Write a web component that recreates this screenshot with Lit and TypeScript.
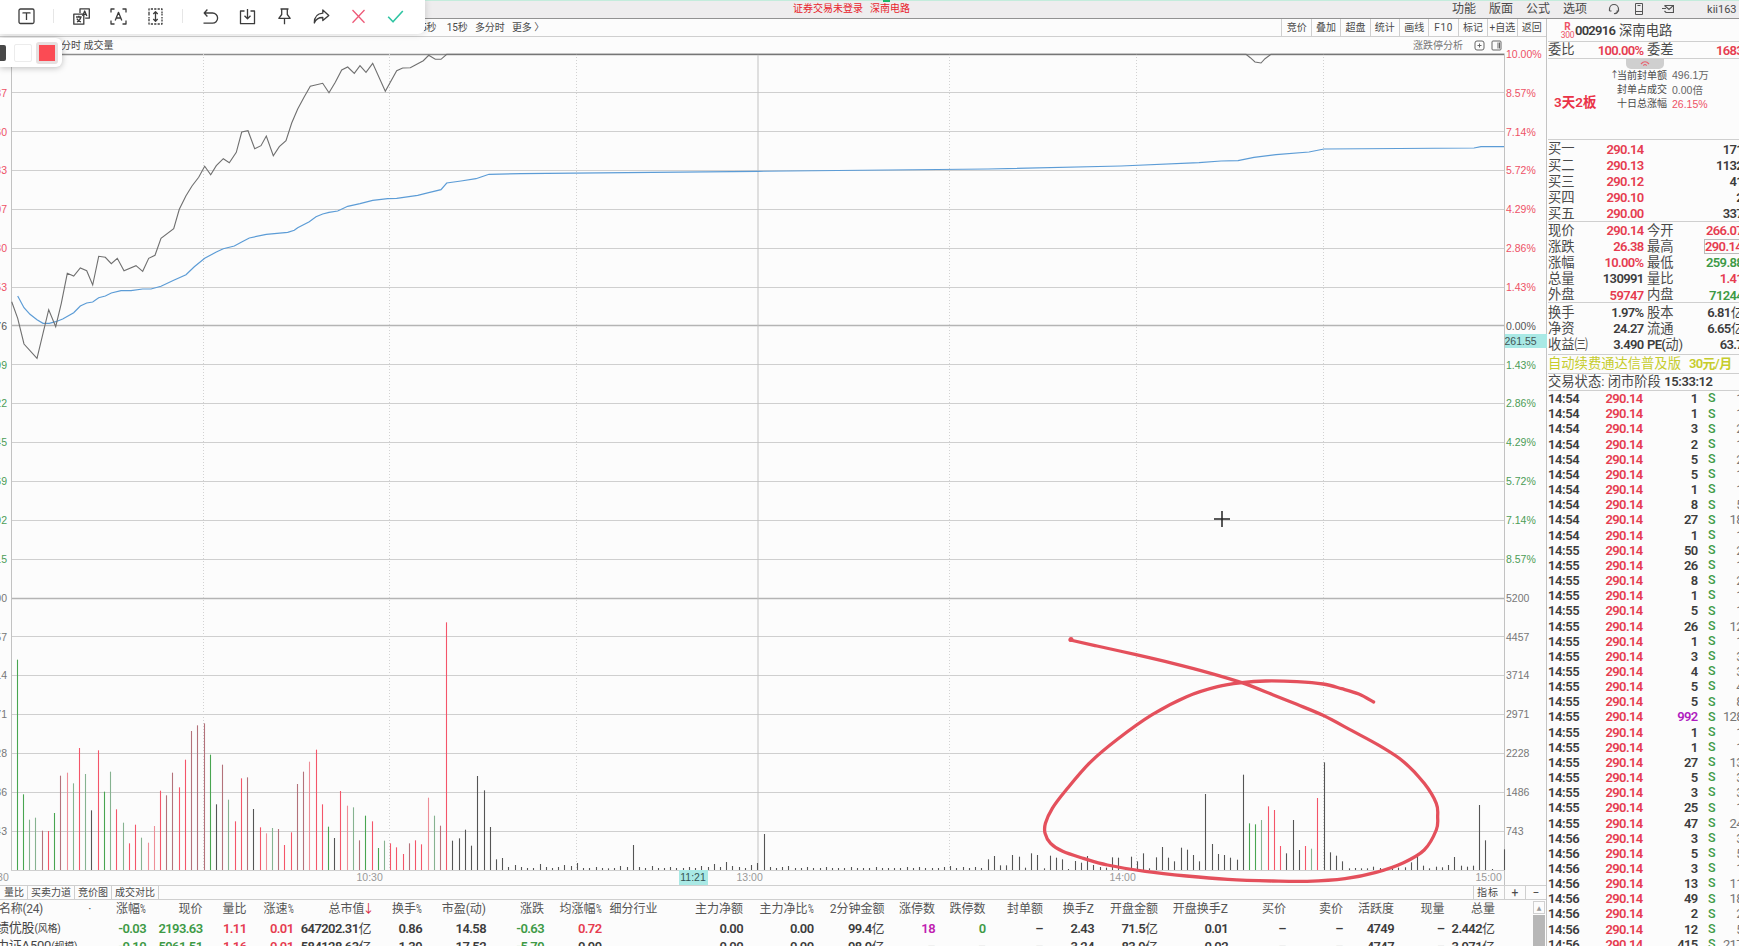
import { LitElement, html, svg, css, nothing } from "lit";
import { customElement, property } from "lit/decorators.js";
import { classMap } from "lit/directives/class-map.js";

type Point = [number, number];

const CHART_LEFT = 10.5;
const CHART_TOP = 54;
const CHART_WIDTH = 1493.5;
const CHART_HEIGHT = 816;
const ROW = CHART_HEIGHT / 21;
const MINUTE = CHART_WIDTH / 240;

const parsePoints = (text: string): Point[] =>
	text
		.trim()
		.split(/\s+/)
		.map((pair) => pair.split(",").map(Number) as Point);

// series are stored in thirds of a pixel, y counted from 40px
const toPolyline = (text: string) =>
	parsePoints(text)
		.map(([x, y]) => `${(x / 3).toFixed(1)},${(40 + y / 3).toFixed(1)}`)
		.join(" ");

const PRICE = toPolyline(`
	32,785 50,835 69,912 108,955 126,880 143,809 164,860 181,790 199,700 218,708
	238,684 257,692 275,735 293,649 313,652 331,671 349,655 369,692 405,677 425,694
	443,655 462,646 480,595 518,566 535,508 555,467 573,438 593,412 611,379 629,404
	646,377 667,356 685,368 706,337 722,276 741,272 761,326 780,317 796,288 817,347
	835,320 855,302 872,249 890,207 910,170 928,139 965,130 984,158 1003,127 1022,90
	1040,81 1060,100 1077,77 1095,97 1115,70 1153,154 1187,92 1205,84 1228,83 1250,71
	1267,62 1283,46 1303,58 1320,58 1337,43 3735,43 3748,53 3762,66 3780,69 3792,56
	3810,43 4509,43
`);

const AVERAGE = toPolyline(`
	50,768 69,803 87,823 108,839 126,850 145,850 164,845 185,837 218,818 238,798
	257,789 275,786 293,773 313,768 331,759 360,752 390,752 425,747 450,747 480,739
	518,721 555,704 580,680 611,655 646,636 667,626 700,618 722,606 745,594 796,583
	860,577 880,571 890,563 925,545 945,530 965,522 984,517 1010,513 1040,499 1077,491
	1115,481 1160,476 1187,475 1250,466 1283,458 1320,449 1337,429 1380,423 1425,416
	1440,411 1464,403 1560,401 2271,394 2961,387 3360,378 3594,368 3660,363 3711,362
	3759,352 3825,344 3924,336 3969,327 4419,324 4440,320 4509,320
`);

// one entry per minute, height in thirds of a pixel plus tone
const VOLUME = `
	631g 227g 151h 157h 118d 117r 171g 283d 292p 260h 366r 288h 179k 359r 235g 295h
	182r 142h 80r 136r 97h 82p 132p 238r 224d 292d 248r 331r 417d 434d 440d 346g 197k
	316d 211h 146r 275r 278d 183k 128r 110p 126h 123d 75r 113r 258d 295d 325p 361r
	197r 130g 96k 237r 193p 188h 89d 163g 146r 66g 88h 80r 68r 48r 80d 89r 77r 217p
	163h 133d 743r 88k 95k 121k 73k 282k 239k 129k 32k 36k 9k 15k 9k 6k 6k 18k 9k
	6k 9k 15k 12k 21k 6k 6k 9k 6k 5k 6k 12k 9k 75k 9k 6k 12k 6k 6k 9k 6k 6k 9k
	6k 12k 9k 18k 9k 24k 12k 9k 6k 15k 21k 108k 9k 6k 9k 12k 6k 6k 9k 6k 6k 9k 6k 6k
	6k 9k 6k 6k 6k 9k 6k 6k 6k 6k 9k 6k 9k 6k 6k 6k 9k 12k 6k 9k 6k 9k 6k
	32k 42k 14k 14k 45k 40k 7k 50k 45k 5k 43k 37k 32k 3k 27k 22k 42k 15k
	9k 7k 38k 37k 5k 40k 26k 50k 5k 38k 69k 37k 26k 67k 61k 45k 26k 228k 78k 48k 45k
	37k 31k 286k 140g 137g 150h 191r 180r 72r 50k 150k 60k 72r 64h 216r 323k 53k
	43k 26k 5k 6k 5k 5k 10k 6k 6k 5k 7k 8k 23k 39k 13k 5k 10k 8k 15k 39k 13k 10k
	13k 195k 89k 3k 0k 62k
`
	.trim()
	.split(/\s+/);

const MARKER = parsePoints(`
	262,90 340,108 453,134 560,160 660,187 760,218 850,254 920,283 996,316 1080,362
	1160,407 1230,455 1290,520 1325,580 1329,620 1325,660 1290,720 1230,758 1150,787
	1060,806 950,814 850,813 720,808 600,798 480,784 370,765 300,745 240,724 205,700
	189,670 190,640 210,595 250,540 320,457 400,387 500,314 600,260 690,230 760,218
	830,213 920,215 996,222 1050,236 1100,252 1143,276
`).map(([x, y]) => [980 + x / 2.904, 610 + y / 3] as Point);

const smoothPath = (points: Point[]) => {
	let d = `M${points[0]}`;
	for (let i = 0; i < points.length - 1; i++) {
		const a = points[i - 1] ?? points[i];
		const b = points[i];
		const c = points[i + 1];
		const e = points[i + 2] ?? c;
		d += `C${b[0] + (c[0] - a[0]) / 6} ${b[1] + (c[1] - a[1]) / 6} ${c[0] - (e[0] - b[0]) / 6} ${c[1] - (e[1] - b[1]) / 6} ${c[0]} ${c[1]}`;
	}
	return d;
};

const PERCENTS = ["10.00", "8.57", "7.14", "5.72", "4.29", "2.86", "1.43", "0.00", "1.43", "2.86", "4.29", "5.72", "7.14", "8.57"];
const PRICES = ["290.14", "286.37", "282.60", "278.83", "275.07", "271.30", "267.53", "263.76", "259.99", "256.22", "252.45", "248.69", "244.92", "241.15"];
const VOLUMES = ["5200", "4457", "3714", "2971", "2228", "1486", "743"];

const toneAt = (row: number) => (row < 7 ? "up" : row > 7 && row < 14 ? "down" : row === 7 ? "zero" : "flat");

@customElement("time-chart")
export class TimeChart extends LitElement {
	static styles = css`
		:host {
			display: grid;
			grid-template-columns: 10.5px 1493.5px 1fr;
			height: 831px;
		}

		.axis {
			font: 10.5px/1 "Liberation Sans", sans-serif;
			margin-top: -19.3px;
			color: #777;
		}

		.axis div {
			height: 38.857px;
			display: flex;
			align-items: center;
		}

		.left div {
			justify-content: flex-end;
			width: 40px;
			margin-left: -33px;
		}

		.right {
			padding-left: 2px;
		}

		.axis .up {
			color: #ee5266;
		}

		.axis .down {
			color: #4c9d57;
		}

		.axis .zero {
			color: #555;
		}

		.plot {
			position: relative;
		}

		svg {
			display: block;
			overflow: visible;
		}

		.times {
			font: 10.5px/15px "Liberation Sans", sans-serif;
			color: #999;
			height: 15px;
		}

		.times span {
			position: absolute;
			top: 816px;
		}

		.times .cursor-time {
			background: #a9e9e5;
			color: #355;
			width: 29px;
			text-align: center;
		}

		.cursor-price {
			position: absolute;
			left: 1494px;
			top: 280px;
			width: 42px;
			height: 14px;
			background: #a9e9e5;
			color: #455;
			font: 10.5px/14px "Liberation Sans", sans-serif;
		}
	`;

	private renderGrid() {
		const rows = Array.from({ length: 22 }, (_, i) => i);
		return svg`
			${rows.map((i) => {
				const y = Math.floor(CHART_TOP + i * ROW + 0.01) + (i === 7 ? -0.5 : 0.5);
				const major = i % 7 === 0 && i < 21;
				return svg`<line x1="10" x2="1504" y1=${y} y2=${y} stroke=${i === 0 ? "#8c8c8c" : major ? "#b4b4b4" : "#cfcfcf"} stroke-width=${major ? 1.4 : 1.1} />`;
			})}
			${[202.5, 388.5, 575.5, 948.5, 1135.5, 1322.5].map(
				(x) => svg`<line x1=${x} x2=${x} y1="54" y2="870" stroke="#d2d2d2" stroke-dasharray="1 2" />`
			)}
			${[10.5, 757, 1503.5].map(
				(x) => svg`<line x1=${x} x2=${x} y1="54" y2=${x > 1500 ? 885 : 870} stroke="#c2c2c2" />`
			)}
		`;
	}

	private renderBars() {
		const tones: Record<string, string> = {
			r: "#f45569",
			p: "#ee8e98",
			d: "#b3727a",
			g: "#48a550",
			h: "#86b290",
			k: "#555",
		};
		return VOLUME.map((bar, i) => {
			const x = Math.floor(CHART_LEFT - 0.4 + (i + 1) * MINUTE) + 0.5;
			const height = parseInt(bar) / 3;
			return svg`<line x1=${x} x2=${x} y1=${870 - height} y2="870" stroke=${tones[bar.slice(-1)]} stroke-width="1.1" />`;
		});
	}

	render() {
		const right = [...PERCENTS.map((p) => `${p}%`), ...VOLUMES];
		const left = [...PRICES, ...VOLUMES];
		return html`
			<div class="axis left">
				${left.map((label, i) => html`<div class=${toneAt(i)}>${label}</div>`)}
			</div>
			<div class="plot">
				<svg
					width=${CHART_WIDTH}
					height=${CHART_HEIGHT}
					viewBox="${CHART_LEFT - 0.5} ${CHART_TOP} ${CHART_WIDTH} ${CHART_HEIGHT}"
				>
					${this.renderGrid()} ${this.renderBars()}
					<polyline points=${AVERAGE} fill="none" stroke="#5c9cd6" stroke-width="1.2" />
					<polyline points=${PRICE} fill="none" stroke="#6f6f6f" stroke-width="1.1" />
				</svg>
				<div class="times">
					<span style="left:-28px">09:30</span>
					<span style="left:346px">10:30</span>
					<span class="cursor-time" style="left:668px">11:21</span>
					<span style="left:726px">13:00</span>
					<span style="left:1099px">14:00</span>
					<span style="left:1465px">15:00</span>
				</div>
				<div class="cursor-price">261.55</div>
			</div>
			<div class="axis right">
				${right.map((label, i) => html`<div class=${toneAt(i)}>${label}</div>`)}
			</div>
		`;
	}
}

const COLUMNS: [string, number][] = [
	["涨幅%", 51],
	["现价", 56.5],
	["量比", 44],
	["涨速%", 47],
	["总市值", 78],
	["换手%", 50.5],
	["市盈(动)", 64],
	["涨跌", 58],
	["均涨幅%", 57.5],
	["细分行业", 56],
	["主力净额", 85.5],
	["主力净比%", 70.5],
	["2分钟金额", 71],
	["涨停数", 50.5],
	["跌停数", 50.5],
	["封单额", 57.5],
	["换手Z", 51],
	["开盘金额", 64],
	["开盘换手Z", 70],
	["买价", 58],
	["卖价", 57],
	["活跃度", 51],
	["现量", 50.5],
	["总量", 50.5],
];

// a leading letter gives the colour: r red, g green, m magenta
const SECTORS = [
	{
		name: "绩优股",
		kind: "(风格)",
		cells: ["g-0.03", "g2193.63", "r1.11", "r0.01", "647202.31亿", "0.86", "14.58", "g-0.63", "r0.72", "", "0.00", "0.00", "99.4亿", "m18", "g0", "–", "2.43", "71.5亿", "0.01", "–", "–", "4749", "–", "2.442亿"],
	},
	{
		name: "中证A500",
		kind: "(规模)",
		cells: ["g-0.10", "g5961.51", "r1.16", "r0.01", "584128.63亿", "1.39", "17.52", "g-5.79", "0.99", "", "0.00", "0.00", "98.9亿", "–", "–", "–", "3.24", "83.9亿", "0.02", "–", "–", "4747", "–", "3.971亿"],
	},
];

@customElement("sector-table")
export class SectorTable extends LitElement {
	static styles = css`
		:host {
			display: flex;
			height: 46px;
			overflow: hidden;
			font-family: "Roboto", "Noto Sans CJK SC", sans-serif;
			color: #444;
		}

		.rows {
			flex: 1;
		}

		.row {
			display: grid;
			height: 18px;
			align-items: center;
			font-size: 13px;
			line-height: 18px;
			white-space: nowrap;
		}

		.head {
			height: 17.5px;
			font-size: 12px;
			color: #555;
			margin-bottom: 1.5px;
		}

		.row > div {
			text-align: right;
		}

		.row > .name {
			text-align: left;
			margin-left: -4px;
			letter-spacing: -0.2px;
		}

		.head > .name {
			margin-left: -1px;
			letter-spacing: -0.3px;
			display: flex;
			justify-content: space-between;
			padding-right: 4px;
		}

		.kind {
			font-size: 10px;
		}

		b {
			font-weight: 600;
			letter-spacing: -0.6px;
			color: #3c3c3c;
		}

		.percent {
			display: inline-block;
			width: 6px;
			font-size: 12px;
			transform: scaleX(0.65);
			transform-origin: left;
		}

		.arrow {
			color: #d8283c;
			font-size: 12px;
			margin: 0 -3px 0 -2px;
		}

		.r {
			color: #e63c50;
		}

		.g {
			color: #3e9a46;
		}

		.m {
			color: #c020b0;
		}

		.scroll {
			width: 13px;
			padding-top: 1px;
			display: flex;
			flex-direction: column;
			gap: 1px;
		}

		.up {
			height: 11px;
			border: 1px solid #d0d0d0;
			font: 6px/11px "DejaVu Sans", sans-serif;
			text-align: center;
			color: #999;
			margin-right: 1px;
		}

		.thumb {
			flex: 1;
			background: #b7b7b7;
			margin-right: 1px;
		}
	`;

	private renderCell(cell: string) {
		const tone = /^[rgm]/.test(cell) ? cell[0] : "";
		const text = tone ? cell.slice(1) : cell;
		const unit = text.endsWith("亿");
		return html`<div><b class=${tone}>${unit ? text.slice(0, -1) : text}</b>${unit ? "亿" : nothing}</div>`;
	}

	private renderHead(label: string) {
		const percent = label.endsWith("%");
		return html`<div>${percent ? label.slice(0, -1) : label}${percent ? html`<span class="percent">%</span>` : nothing}${label === "总市值"
				? html`<span class="arrow">↓</span>`
				: nothing}</div>`;
	}

	render() {
		const template = `grid-template-columns: 95px ${COLUMNS.map(([, width]) => `${width}px`).join(" ")}`;
		return html`
			<div class="rows">
				<div class="row head" style=${template}>
					<div class="name"><span>名称(24)</span><span>·</span></div>
					${COLUMNS.map(([label]) => this.renderHead(label))}
				</div>
				${SECTORS.map(
					(sector) => html`
						<div class="row" style=${template}>
							<div class="name">${sector.name}<span class="kind">${sector.kind}</span></div>
							${sector.cells.map((cell) => this.renderCell(cell))}
						</div>
					`
				)}
			</div>
			<div class="scroll">
				<div class="up">▲</div>
				<div class="thumb"></div>
			</div>
		`;
	}
}

const TRADE_VOLUMES = [1, 1, 3, 2, 5, 5, 1, 8, 27, 1, 50, 26, 8, 1, 5, 26, 1, 3, 4, 5, 5, 992, 1, 1, 27, 5, 3, 25, 47, 3, 5, 3, 13, 49, 2, 12, 415];
const TRADE_COUNTS = [1, 1, 2, 1, 2, 1, 1, 5, 18, 1, 2, 1, 2, 1, 1, 12, 1, 3, 3, 4, 8, 128, 1, 1, 13, 3, 3, 1, 24, 3, 5, 1, 11, 18, 2, 5, 217];

@customElement("quote-panel")
export class QuotePanel extends LitElement {
	static styles = css`
		:host {
			display: block;
			width: 197px;
			font: 13.3px/1 "Roboto", "Noto Sans CJK SC", sans-serif;
			color: #4a4a4a;
			box-sizing: border-box;
			border-left: 1px solid #c4c4c4;
			padding-left: 1px;
			white-space: nowrap;
		}

		b {
			font-weight: 600;
			font-size: 13px;
			letter-spacing: -0.65px;
			color: #3c3c3c;
		}

		.section {
			border-bottom: 1px solid #cfcfcf;
			box-sizing: border-box;
		}

		.title {
			height: 23px;
			display: flex;
			align-items: center;
			padding: 1px 0 0 13px;
		}

		.badge {
			display: flex;
			flex-direction: column;
			align-items: center;
			width: 13px;
			margin-right: 1px;
			font-size: 8.5px;
			line-height: 8px;
			color: #ee5266;
		}

		.badge strong {
			font-size: 10px;
		}

		.badge span {
			letter-spacing: -0.3px;
		}

		.title b {
			letter-spacing: -0.75px;
			margin-right: 4px;
		}

		.row {
			display: grid;
			grid-template-columns: 30px 65.5px 30px 69.5px;
			height: 16.1px;
			align-items: center;
		}

		.row b {
			text-align: right;
		}

		.row b i {
			font-style: normal;
			font-weight: 400;
			font-size: 13px;
		}

		.row span + b + span {
			padding-left: 3.5px;
		}

		.seal {
			height: 81px;
			display: grid;
			grid-template-columns: 62px 1fr;
			position: relative;
		}

		.handle {
			position: absolute;
			left: 78px;
			top: 0;
			width: 38px;
			height: 10px;
			border-radius: 0 0 5px 5px;
			background: #cfcfcf;
			display: flex;
			justify-content: center;
		}

		.streak {
			align-self: end;
			padding: 0 0 30px 6px;
			color: #ea3348;
			font-weight: 600;
			font-size: 13.5px;
		}

		.facts {
			padding-top: 9.5px;
			font-size: 10px;
		}

		.facts div {
			height: 14.2px;
			display: flex;
			align-items: center;
		}

		.facts em {
			width: 7px;
			font-style: normal;
			text-align: right;
			font-size: 9px;
		}

		.facts span {
			width: 55px;
		}

		.facts p {
			margin: 0;
			font-size: 10.5px;
		}

		.facts .value {
			font-family: "Liberation Sans", "Noto Sans CJK SC", sans-serif;
			color: #666;
		}

		.facts .r {
			color: #ee5266;
		}

		.buys {
			height: 82px;
			padding-top: 1px;
		}

		.quote {
			height: 81px;
			padding-top: 0.5px;
		}

		.finance {
			height: 52px;
			padding-top: 1.5px;
		}

		.promo {
			height: 19px;
			line-height: 17px;
			color: #c6cc2c;
		}

		.promo b {
			color: #c6cc2c;
			margin-left: 8px;
		}

		.state {
			height: 17px;
			line-height: 16px;
		}

		.state b {
			letter-spacing: -0.4px;
		}

		.boxed {
			border: 1px solid #bbb;
			justify-self: end;
			height: 13px;
			line-height: 13px;
		}

		.trade {
			display: grid;
			grid-template-columns: 40px 54.5px 55px 18px 27.5px;
			height: 15.17px;
			align-items: center;
		}

		.trade > * {
			text-align: right;
		}

		.trade > :first-child {
			text-align: left;
			letter-spacing: -0.4px;
		}

		.trade .side {
			color: #3e9a46;
			font-size: 12.5px;
			font-weight: 500;
		}

		.trade .count {
			font-size: 13px;
			letter-spacing: -0.6px;
			color: #777;
		}

		.r {
			color: #e63c50;
		}

		.g {
			color: #3e9a46;
		}

		.m {
			color: #b01cc0;
		}
	`;

	private renderRow(label: string, value: string, tone = "", label2 = "", value2 = "", tone2 = "") {
		const unit = value2.endsWith("亿");
		return html`
			<div class="row">
				<span>${label}</span>
				<b class=${tone}>${value}</b>
				<span>${label2.startsWith("PE") ? html`<b>PE(</b>动)` : label2}</span>
				<b class=${tone2}>${unit ? value2.slice(0, -1) : value2}${unit ? html`<i>亿</i>` : nothing}</b>
			</div>
		`;
	}

	private renderTrade(volume: number, index: number) {
		const time = index < 10 ? "14:54" : index < 29 ? "14:55" : "14:56";
		return html`
			<div class="trade">
				<b>${time}</b>
				<b class="r">290.14</b>
				<b class=${classMap({ m: volume > 900 })}>${volume}</b>
				<span class="side">S</span>
				<span class="count">${TRADE_COUNTS[index]}</span>
			</div>
		`;
	}

	render() {
		return html`
			<div class="section title">
				<div class="badge"><strong>R</strong><span>300</span></div>
				<b>002916</b>深南电路
			</div>
			<div class="section">${this.renderRow("委比", "100.00%", "r", "委差", "1683", "r")}</div>
			<div class="section seal">
				<div class="handle">
					<svg width="10" height="9" viewBox="0 0 10 9" fill="none" stroke="#e8606e" stroke-width="1.2">
						<path d="M1 5Q5 0.5 9 5M3.4 6.6Q5 4.4 6.6 6.6" />
					</svg>
				</div>
				<div class="streak">3天2板</div>
				<div class="facts">
					<div><em>↑</em><span>当前封单额</span><p class="value">496.1万</p></div>
					<div><em></em><span>封单占成交</span><p class="value">0.00倍</p></div>
					<div><em></em><span>十日总涨幅</span><p class="value r">26.15%</p></div>
				</div>
			</div>
			<div class="section buys">
				${this.renderRow("买一", "290.14", "r", "", "171")} ${this.renderRow("买二", "290.13", "r", "", "1132")}
				${this.renderRow("买三", "290.12", "r", "", "41")} ${this.renderRow("买四", "290.10", "r", "", "2")}
				${this.renderRow("买五", "290.00", "r", "", "337")}
			</div>
			<div class="section quote">
				${this.renderRow("现价", "290.14", "r", "今开", "266.07", "r")}
				${this.renderRow("涨跌", "26.38", "r", "最高", "290.14", "r boxed")}
				${this.renderRow("涨幅", "10.00%", "r", "最低", "259.88", "g")}
				${this.renderRow("总量", "130991", "", "量比", "1.41", "r")}
				${this.renderRow("外盘", "59747", "r", "内盘", "71244", "g")}
			</div>
			<div class="section finance">
				${this.renderRow("换手", "1.97%", "", "股本", "6.81亿")} ${this.renderRow("净资", "24.27", "", "流通", "6.65亿")}
				${this.renderRow("收益㈢", "3.490", "", "PE(动)", "63.7")}
			</div>
			<div class="section promo">自动续费通达信普及版<b>30元/月</b></div>
			<div class="section state">交易状态: 闭市阶段 <b>15:33:12</b></div>
			${TRADE_VOLUMES.map((volume, i) => this.renderTrade(volume, i))}
		`;
	}
}

const ICONS = {
	text: svg`<rect x="1" y="1" width="15" height="14.5" rx="1.5" /><path d="M5 5.6V4.8H12V5.6M8.5 4.8V12" />`,
	translate: svg`<path d="M7 5V.8H16.3V10.2H12.2" /><rect x=".8" y="6.2" width="10" height="10" /><path d="M9.6 8L11.7 3L13.8 8M10.3 6.4H13.1M3 9H8.6M5.8 7.8V9M4 14C6 13 7.4 11.5 7.8 9.2M3.8 10.6C4.8 12.4 6 13.3 8 14" />`,
	ocr: svg`<path d="M1 4.5V1H4.5M12.5 1H16V4.5M16 12.5V16H12.5M4.5 16H1V12.5M5.2 12.6L8.5 4.3L11.8 12.6M6.3 10H10.7" />`,
	scroll: svg`<path d="M2 6V1H15V6M2 11V16H15V11" stroke-dasharray="2.2 1.2" /><path d="M2 6V11M15 6V11" stroke-dasharray="1.5 1.5" /><path d="M8.5 4V13M6.3 6L8.5 3.8L10.7 6M6.3 11L8.5 13.2L10.7 11" />`,
	undo: svg`<path d="M5.4 1.5L2.2 5L5.4 8.5M2.4 5H10.5A5 5 0 0 1 10.5 15.2H1.5" />`,
	save: svg`<path d="M5.5 3H1.5V15.7H15.5V3H11.5M8.5 1V10.5M5.5 7.7L8.5 10.7L11.5 7.7" />`,
	pin: svg`<path d="M4.5 1H12.5M5.7 1V6.5L2.8 10.3H14.2L11.3 6.5V1M8.5 10.3V16.3" />`,
	share: svg`<path d="M9.8 2L15.8 7.4L9.8 12.6V9.5C5.5 9.4 3 11 1.3 15C1.3 9 4.5 5.6 9.8 5.2Z" />`,
	cancel: svg`<path d="M2.5 2L14.5 14.8M14.5 2L2.5 14.8" stroke="#ee5a78" />`,
	confirm: svg`<path d="M1.2 8.8L6 13.8L15.8 3" stroke="#2fc4a2" stroke-width="1.6" />`,
};

@customElement("capture-toolbar")
export class CaptureToolbar extends LitElement {
	static styles = css`
		:host {
			display: block;
		}

		.bar {
			width: 425px;
			height: 34px;
			box-sizing: border-box;
			padding: 0 0 2px 7.5px;
			background: #fff;
			border-radius: 0 0 7px 0;
			box-shadow: 0 0 7px rgba(0, 0, 0, 0.16);
			display: flex;
			align-items: center;
		}

		svg {
			flex: none;
			width: 17px;
			height: 17px;
			padding: 0 10px;
			fill: none;
			stroke: #3c3c3c;
			stroke-width: 1.3;
			stroke-linejoin: round;
		}

		.gap {
			flex: none;
			width: 1px;
			height: 14px;
			background: #e6e6e6;
			margin: 0 8.5px;
		}

		.swatches {
			width: 62px;
			height: 29px;
			margin-top: 4px;
			background: #fff;
			border-radius: 0 6px 6px 0;
			box-shadow: 0 1px 6px rgba(0, 0, 0, 0.25);
			display: flex;
			align-items: center;
			gap: 6px;
		}

		.dark {
			width: 6px;
			height: 16px;
			background: #484848;
			border-radius: 0 2px 2px 0;
		}

		.white {
			width: 16px;
			height: 16px;
			margin-left: 2px;
			border: 1px solid #ececec;
			border-radius: 2px;
		}

		.red {
			width: 16px;
			height: 16px;
			background: #fb4b54;
			border: 3px solid #e6e0e0;
			border-radius: 3px;
			margin-left: -2px;
		}
	`;

	@property({ type: String })
	color = "red";

	private icon(name: keyof typeof ICONS) {
		return html`<svg viewBox="0 0 17 17">${ICONS[name]}</svg>`;
	}

	render() {
		return html`
			<div class="bar">
				${this.icon("text")}
				<div class="gap"></div>
				${this.icon("translate")} ${this.icon("ocr")} ${this.icon("scroll")}
				<div class="gap"></div>
				${this.icon("undo")} ${this.icon("save")} ${this.icon("pin")} ${this.icon("share")}
				${this.icon("cancel")} ${this.icon("confirm")}
			</div>
			<div class="swatches">
				<div class="dark"></div>
				<div class="white"></div>
				<div class=${this.color}></div>
			</div>
		`;
	}
}

@customElement("app-root")
export class AppRoot extends LitElement {
	static styles = css`
		:host {
			display: block;
			position: relative;
			width: 1739px;
			height: 946px;
			overflow: hidden;
			background: #fcfcfc;
			font: 10px/1 "Roboto", "Noto Sans CJK SC", sans-serif;
			color: #4a4a4a;
			white-space: nowrap;
		}

		.titlebar {
			height: 19px;
			box-sizing: border-box;
			border-top: 1px solid #c4ecdc;
			border-bottom: 1px solid #929292;
			background: #eeedee;
			display: grid;
			grid-template-columns: 793px 659px 1fr;
			align-items: center;
		}

		.notice {
			color: #e8232c;
			display: flex;
			gap: 7px;
			padding-bottom: 2px;
		}

		.menu {
			display: flex;
			align-items: center;
			gap: 13px;
			font-size: 12px;
			padding-bottom: 1px;
		}

		.menu svg {
			flex: none;
			width: 12px;
			height: 12px;
			fill: none;
			stroke: #555;
		}

		.menu .headset {
			margin-left: 8px;
		}

		.menu .mail {
			margin-left: 4px;
		}

		.user {
			font-size: 11px;
			margin-left: 20px;
		}

		.main {
			display: flex;
		}

		.left {
			width: 1546px;
			flex: none;
		}

		.periods {
			height: 18px;
			box-sizing: border-box;
			border-bottom: 1px solid #cfcfcf;
			display: flex;
			align-items: center;
			padding-left: 421px;
		}

		.periods > span {
			margin-right: 7px;
		}

		.periods .first {
			margin-right: 10px;
		}

		.actions {
			margin-left: auto;
			display: flex;
			height: 17px;
		}

		.actions div {
			box-sizing: border-box;
			width: 29.4px;
			border-left: 1px solid #cfcfcf;
			display: flex;
			align-items: center;
			justify-content: center;
		}

		.actions div:nth-child(6) {
			letter-spacing: 0.7px;
		}

		.indicator {
			height: 17px;
			display: flex;
			align-items: center;
			padding-left: 61px;
		}

		.analysis {
			margin-left: auto;
			display: flex;
			align-items: center;
			padding-right: 44px;
			color: #777;
		}

		.analysis svg {
			width: 11px;
			height: 11px;
			margin-left: 6px;
			fill: none;
			stroke: #666;
		}

		.analysis svg:first-of-type {
			margin-left: 11px;
		}

		.tabs {
			height: 15px;
			box-sizing: border-box;
			border-top: 1px solid #cfcfcf;
			border-bottom: 1px solid #cfcfcf;
			display: flex;
			align-items: stretch;
		}

		.tabs div {
			padding: 0 3px;
			border-right: 1px solid #cfcfcf;
			display: flex;
			align-items: center;
		}

		.tabs div:first-child {
			padding-left: 4px;
		}

		.tabs .push {
			margin-left: auto;
			border-left: 1px solid #cfcfcf;
			letter-spacing: 1px;
			width: 24px;
		}

		.tabs .step {
			width: 14px;
			justify-content: center;
			font-size: 12px;
		}

		.tabs .step:last-child {
			border-right: 0;
		}

		.toolbar,
		.overlay {
			position: absolute;
			left: 0;
			top: 0;
		}

		.overlay {
			pointer-events: none;
		}

		.peek {
			position: absolute;
			left: 883px;
			top: 0;
			width: 7px;
			height: 2px;
			background: #18b868;
		}
	`;

	private actions = ["竞价", "叠加", "超盘", "统计", "画线", "F10", "标记", "+自选", "返回"];
	private tabs = ["量比", "买卖力道", "竞价图", "成交对比"];

	render() {
		return html`
			<div class="titlebar">
				<span></span>
				<div class="notice"><span>证券交易未登录</span><span>深南电路</span></div>
				<div class="menu">
					<span>功能</span><span>版面</span><span>公式</span><span>选项</span>
					<svg class="headset" viewBox="0 0 12 12">
						<path d="M1.5 8V6A4.5 4.5 0 0 1 10.5 6V8H8.5M1.5 8H3.5M10 8Q9 11 6 10.5" stroke-width="1.2" />
					</svg>
					<svg viewBox="0 0 12 12"><path d="M2.5 .5H9.5V11.5H2.5ZM2.5 8.5H9.5M4.5 2.5H7.5" /></svg>
					<svg class="mail" viewBox="0 0 12 12">
						<path d="M2.5 2.5H11.5V9.5H4L2.5 8M2.5 2.5L7 6.5L11.5 2.5M0 5.5H4" stroke-width="1.2" />
					</svg>
					<span class="user">kii163</span>
				</div>
			</div>
			<div class="main">
				<div class="left">
					<div class="periods">
						<span class="first">5秒</span><span>15秒</span><span>多分时</span><span>更多 〉</span>
						<div class="actions">${this.actions.map((label) => html`<div>${label}</div>`)}</div>
					</div>
					<div class="indicator">
						<span>分时 成交量</span>
						<div class="analysis">
							涨跌停分析
							<svg viewBox="0 0 11 11"><rect x="1" y="1" width="9" height="9" rx="2" /><path d="M3.5 5.5H7.5M5.5 3.5V7.5" /></svg>
							<svg viewBox="0 0 11 11"><rect x="1" y="1" width="9" height="9" rx="1" /><path d="M7 2.5V8.5M8.5 2.5V8.5" /></svg>
						</div>
					</div>
					<time-chart></time-chart>
					<div class="tabs">
						${this.tabs.map((tab) => html`<div>${tab}</div>`)}
						<div class="push">指标</div>
						<div class="step">+</div>
						<div class="step">−</div>
					</div>
					<sector-table></sector-table>
				</div>
				<quote-panel></quote-panel>
			</div>
			<div class="peek"></div>
			<svg class="overlay" width="1739" height="946" viewBox="0 0 1739 946" fill="none">
				<path d=${smoothPath(MARKER)} stroke="#e4505c" stroke-width="3.3" stroke-linecap="round" stroke-linejoin="round" />
				<circle cx="1071" cy="639.5" r="2.5" fill="#e4505c" />
				<path d="M1214 519H1230M1222 511V527" stroke="#222" stroke-width="1.5" />
			</svg>
			<capture-toolbar class="toolbar"></capture-toolbar>
		`;
	}
}
